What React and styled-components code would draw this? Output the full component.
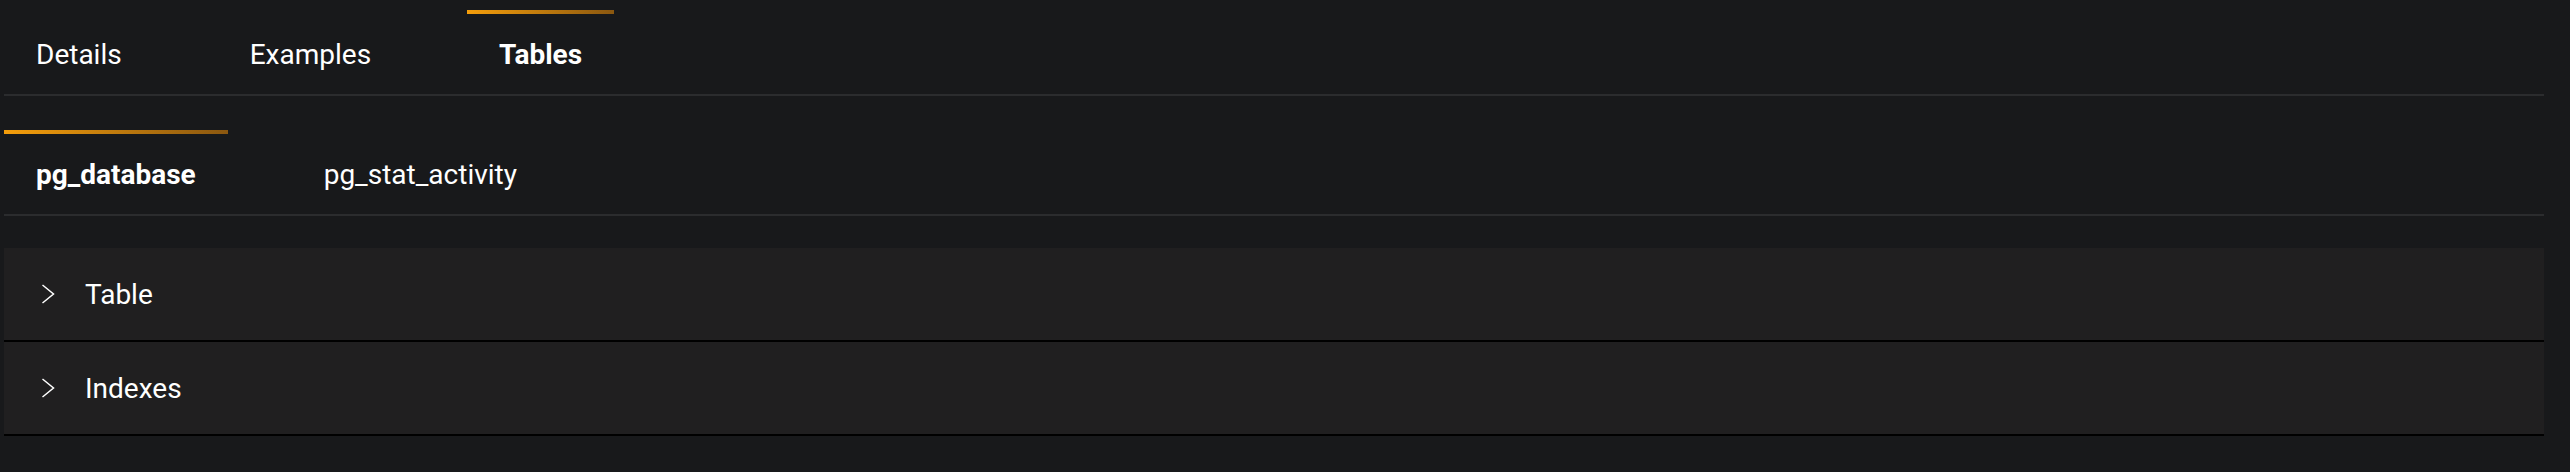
import React, { useState } from "react";
import styled, { createGlobalStyle } from "styled-components";

const GlobalStyle = createGlobalStyle`
  html, body {
    margin: 0;
    padding: 0;
    background-color: #18191b;
    min-height: 100%;
  }
  body {
    font-family: Roboto, "Liberation Sans", sans-serif;
    color: #ffffff;
  }
`;

const TOP_TABS = ["Details", "Examples", "Tables"];
const SUB_TABS = ["pg_database", "pg_stat_activity"];
const SECTIONS = ["Table", "Indexes"];

const Chevron = () => (
  <svg width="14" height="20" viewBox="0 0 14 20" fill="none">
    <polyline
      points="1.5,1 12.5,10 1.5,19"
      stroke="#ffffff"
      strokeWidth="1.5"
      strokeLinejoin="miter"
    />
  </svg>
);

const App = () => {
  const [tab, setTab] = useState("Tables");
  const [subTab, setSubTab] = useState("pg_database");

  return (
    <>
      <GlobalStyle />
      <Page>
        <TabBar $top={10}>
          {TOP_TABS.map((name) => (
            <Tab key={name} $active={tab === name} onClick={() => setTab(name)}>
              {name}
            </Tab>
          ))}
        </TabBar>
        <TabBar $top={34}>
          {SUB_TABS.map((name) => (
            <Tab
              key={name}
              $active={subTab === name}
              onClick={() => setSubTab(name)}
            >
              {name}
            </Tab>
          ))}
        </TabBar>
        <Sections>
          {SECTIONS.map((name) => (
            <Section key={name}>
              <Chevron />
              <SectionTitle>{name}</SectionTitle>
            </Section>
          ))}
        </Sections>
      </Page>
    </>
  );
};

const Page = styled.div`
  padding: 0 26px 0 4px;
  min-height: 472px;
  box-sizing: border-box;
`;

const TabBar = styled.div`
  display: flex;
  gap: 64px;
  margin-top: ${(p) => p.$top}px;
  border-bottom: 2px solid #2b2c2e;
`;

const Tab = styled.div`
  height: 84px;
  box-sizing: border-box;
  padding: 0 32px;
  display: flex;
  align-items: center;
  font-size: 28px;
  font-weight: ${(p) => (p.$active ? 700 : 400)};
  color: #ffffff;
  cursor: pointer;
  border-top: 4px solid transparent;
  border-image: ${(p) =>
    p.$active ? "linear-gradient(90deg, #f59e0b, #8a5710) 1" : "none"};
`;

const Sections = styled.div`
  margin-top: 32px;
  display: flex;
  flex-direction: column;
`;

const Section = styled.div`
  height: 94px;
  box-sizing: border-box;
  background-color: #201f20;
  border-bottom: 2px solid #000000;
  display: flex;
  align-items: center;
  padding-left: 37px;
  gap: 30px;
  cursor: pointer;
  svg {
    flex-shrink: 0;
  }
`;

const SectionTitle = styled.span`
  font-size: 28px;
  font-weight: 400;
  color: #ffffff;
`;

export default App;
